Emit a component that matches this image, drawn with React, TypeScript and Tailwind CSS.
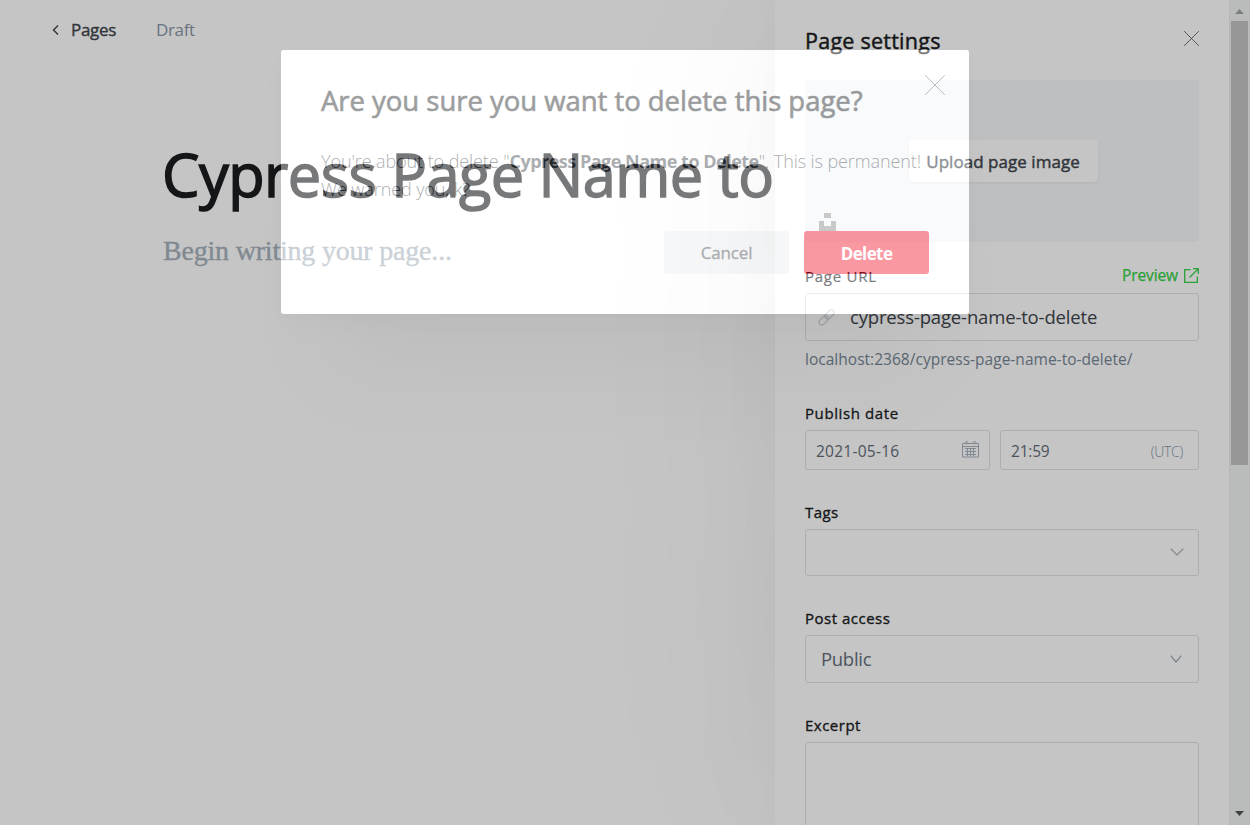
import React from "react";

function CloseIcon({ className }: { className: string }) {
  return (
    <svg className={className} viewBox="0 0 20 20" fill="none" stroke="currentColor" strokeWidth="1">
      <path d="M.2.2l19.6 19.6M19.8.2L.2 19.8" />
    </svg>
  );
}

function Label({ children, className = "" }: { children: React.ReactNode; className?: string }) {
  return (
    <div className={`text-[15px] leading-5 whitespace-nowrap text-[#15171a] ${className}`}>
      {children}
    </div>
  );
}

function ScrollBar() {
  return (
    <div className="flex w-[21px] shrink-0 border-l border-[#e8eaed] bg-[#f1f3f4] pl-px">
      <div className="flex w-[17px] flex-col items-center">
        <div className="flex h-[21px] items-center pt-[2px]">
          <svg className="h-[5px] w-[9px] text-[#a3a3a3]" viewBox="0 0 9 5" fill="currentColor">
            <path d="M4.5 0L9 5H0z" />
          </svg>
        </div>
        <div className="h-[444px] w-[17px] bg-[#c1c1c1]" />
        <div className="mt-auto flex h-[14px] items-start">
          <svg className="h-[5px] w-[9px] text-[#505050]" viewBox="0 0 9 5" fill="currentColor">
            <path d="M0 0h9L4.5 5z" />
          </svg>
        </div>
      </div>
    </div>
  );
}

function Editor() {
  return (
    <main className="flex w-[775px] shrink-0 flex-col">
      <header className="flex h-[60px] items-center pl-[52px] text-base leading-6">
        <svg className="h-[10px] w-[7px] text-[#394047]" viewBox="0 0 7 10" fill="none" stroke="currentColor" strokeWidth="1.4">
          <path d="M6 .5L1.5 5 6 9.5" />
        </svg>
        <span className="ml-3 w-[46px] text-[17px] tracking-[-0.3px] whitespace-nowrap text-[#394047] [-webkit-text-stroke:0.35px]">Pages</span>
        <span className="ml-[39px] text-[17px] tracking-[-0.35px] whitespace-nowrap text-[#8494a3]">Draft</span>
      </header>
      <div className="pl-[162px]">
        <h1 className="mt-[77px] h-[74px] text-[59.5px] leading-[74px] tracking-[-0.55px] whitespace-nowrap text-[#15171a] [-webkit-text-stroke:1.5px]">
          Cypress Page Name to
        </h1>
        <p className="mt-[22px] ml-px font-['Liberation_Serif',serif] text-[28px] leading-9 tracking-[-0.2px] whitespace-nowrap text-[#a4b0bb] [-webkit-text-stroke:0.35px]">
          Begin writing your page...
        </p>
      </div>
    </main>
  );
}

function Settings() {
  return (
    <aside className="flex w-[475px] shrink-0 bg-white shadow-[0_0_100px_rgba(0,0,0,0.04),0_0_220px_rgba(0,0,0,0.055)]">
      <div className="flex min-w-0 flex-1 flex-col pr-[30px] pl-[30px]">
        <div className="flex h-20 shrink-0 items-start justify-between">
          <h2 className="mt-[27px] text-[21.5px] leading-7 tracking-[0.25px] whitespace-nowrap text-[#15171a] [-webkit-text-stroke:0.45px]">
            Page settings
          </h2>
          <CloseIcon className="mt-[31px] h-[15px] w-[15px] text-[#394047]" />
        </div>
        <div className="flex h-[162px] shrink-0 flex-col items-center rounded-[3px] bg-[#f6f8fa] pt-[60px] pl-[2px]">
          <button className="h-[42px] w-[189px] shrink-0 rounded bg-white pt-[2px] text-[17px] tracking-[0.04px] whitespace-nowrap text-[#394047] shadow-[0_1px_3px_rgba(0,0,0,0.08)] [-webkit-text-stroke:0.4px]">
            Upload page image
          </button>
          <svg className="mt-[31px] ml-[12px] h-[18px] w-[17px] shrink-0 self-start text-[#a3a3a3]" viewBox="0 0 17 18" fill="currentColor">
            <path d="M5 0h7v5H5zM0 8h5v5h7V8h5v10H0z" />
          </svg>
        </div>
        <div className="mt-[23px] flex h-[28px] shrink-0 items-start justify-between">
          <Label className="mt-px tracking-[0.75px] [-webkit-text-stroke:0.2px]">Page URL</Label>
          <span className="flex items-center text-[15.5px] leading-5 tracking-[-0.1px] whitespace-nowrap text-[#30cf43] [-webkit-text-stroke:0.25px]">
            Preview
            <svg className="ml-[6px] h-[15px] w-[15px]" viewBox="0 0 15 15" fill="none" stroke="currentColor" strokeWidth="1.3">
              <path d="M6.5 1.7H.7v12.6h12.6V8.5M9 .7h5.3V6M14 1L5.500 9.500" />
            </svg>
          </span>
        </div>
        <div className="flex h-12 shrink-0 items-center rounded-[3px] border border-[#dde1e5] pl-3">
          <svg className="h-[17px] w-[17px] text-[#c3ccd4]" viewBox="0 0 24 24" fill="none" stroke="currentColor" strokeWidth="1.5">
            <rect x="-7.500" y="-3.900" width="15" height="7.800" rx="3.900" transform="translate(7.800 16.200) rotate(-45)" />
            <rect x="-7.500" y="-3.900" width="15" height="7.800" rx="3.900" transform="translate(16.200 7.800) rotate(-45)" />
          </svg>
          <span className="ml-[15px] text-[18.500px] tracking-[-0.16px] whitespace-nowrap text-[#394047]">cypress-page-name-to-delete</span>
        </div>
        <p className="mt-2 text-[15.500px] leading-5 tracking-[0.02px] whitespace-nowrap text-[#738393]">
          localhost:2368/cypress-page-name-to-delete/
        </p>
        <Label className="mt-[34px] tracking-[0.6px] [-webkit-text-stroke:0.3px]">Publish date</Label>
        <div className="mt-[7px] flex h-10 shrink-0 gap-[10px]">
          <div className="flex w-[185px] items-center justify-between rounded-[3px] border border-[#dde1e5] pr-[10px] pl-[10px]">
            <span className="pt-[3px] text-[15.500px] tracking-[0.25px] text-[#5d6a76]">2021-05-16</span>
            <svg className="-mt-[2px] h-[17px] w-[17px] text-[#a4b0bb]" viewBox="0 0 17 17" fill="none" stroke="currentColor" strokeWidth="1">
              <path d="M.5 2.500h16v13.500H.5zM.5 5.500h16M3 7.500h11M3 10.500h11M3 13.500h11M5.500 7v8M8.500 7v8M11.500 7v8" />
              <circle cx="4.500" cy="1.600" r="1.200" />
              <circle cx="12.500" cy="1.600" r="1.200" />
            </svg>
          </div>
          <div className="flex flex-1 items-center justify-between rounded-[3px] border border-[#dde1e5] pr-[15px] pl-[10px]">
            <span className="pt-[3px] text-[15.500px] tracking-[-0.2px] text-[#5d6a76]">21:59</span>
            <span className="pt-[2px] text-[14px] font-light tracking-[-0.3px] text-[#8494a3]">(UTC)</span>
          </div>
        </div>
        <Label className="mt-8 tracking-[0.4px] [-webkit-text-stroke:0.35px]">Tags</Label>
        <div className="mt-[7px] flex h-[47px] shrink-0 items-center justify-end rounded-[3px] border border-[#dde1e5] pr-[14px]">
          <svg className="-mt-px h-2 w-[14px] text-[#a4b0bb]" viewBox="0 0 14 8" fill="none" stroke="currentColor" strokeWidth="1.2">
            <path d="M.7.8L7 7 13.300.8" />
          </svg>
        </div>
        <Label className="mt-8 tracking-[0.5px] [-webkit-text-stroke:0.35px]">Post access</Label>
        <div className="mt-[7px] flex h-12 shrink-0 items-center justify-between rounded-[3px] border border-[#dde1e5] pr-[16px] pl-[15px]">
          <span className="text-[18.500px] tracking-[-0.3px] text-[#5d6a76]">Public</span>
          <svg className="h-2 w-3 text-[#a4b0bb]" viewBox="0 0 12 8" fill="none" stroke="currentColor" strokeWidth="1.400">
            <path d="M.7.6L6 7 11.300.6" />
          </svg>
        </div>
        <Label className="mt-8 tracking-[0.5px] [-webkit-text-stroke:0.35px]">Excerpt</Label>
        <div className="mt-[7px] h-[110px] shrink-0 rounded-[3px] border border-[#dde1e5]" />
      </div>
      <ScrollBar />
    </aside>
  );
}

function DeleteDialog() {
  return (
    <div className="absolute top-[50px] left-[281px] h-[264px] w-[688px] rounded-[3px] shadow-[0_0_0_2000px_rgba(20,20,20,0.247)]">
      <div className="relative h-full w-full rounded-[3px] bg-white px-10 pt-[33px] opacity-[0.42] shadow-[0_3px_7px_rgba(0,0,0,0.03),0_12px_25px_-5px_rgba(0,0,0,0.05),0_100px_90px_-50px_rgba(0,0,0,0.09)]">
        <CloseIcon className="absolute top-[25px] right-6 h-5 w-5 text-[#626d79]" />
        <h1 className="text-[27.500px] leading-9 tracking-[-0.03px] whitespace-nowrap text-[#15171a] [-webkit-text-stroke:0.65px]">
          Are you sure you want to delete this page?
        </h1>
        <p className="mt-[28px] text-[18px] font-light leading-7 tracking-[-0.09px] whitespace-nowrap text-[#394047]">
          You're about to delete "<strong className="font-bold tracking-[-0.5px]">Cypress Page Name to Delete</strong>". This is permanent!
          <br />
          We warned you, k?
        </p>
        <div className="mt-[28px] flex justify-end gap-[15px]">
          <button className="h-[43px] w-[125px] rounded-[3px] bg-[#ebeef0] text-[17px] tracking-[-0.15px] text-[#394047] [-webkit-text-stroke:0.35px]">Cancel</button>
          <button className="h-[43px] w-[125px] rounded-[3px] bg-[#f50b23] pt-[2px] text-[17px] font-bold tracking-[-0.600px] text-white">Delete</button>
        </div>
      </div>
    </div>
  );
}

export default function App() {
  return (
    <div className="relative flex h-[825px] w-[1250px] overflow-hidden bg-white font-['Open_Sans','Noto_Sans',sans-serif]">
      <Editor />
      <Settings />
      <DeleteDialog />
    </div>
  );
}
